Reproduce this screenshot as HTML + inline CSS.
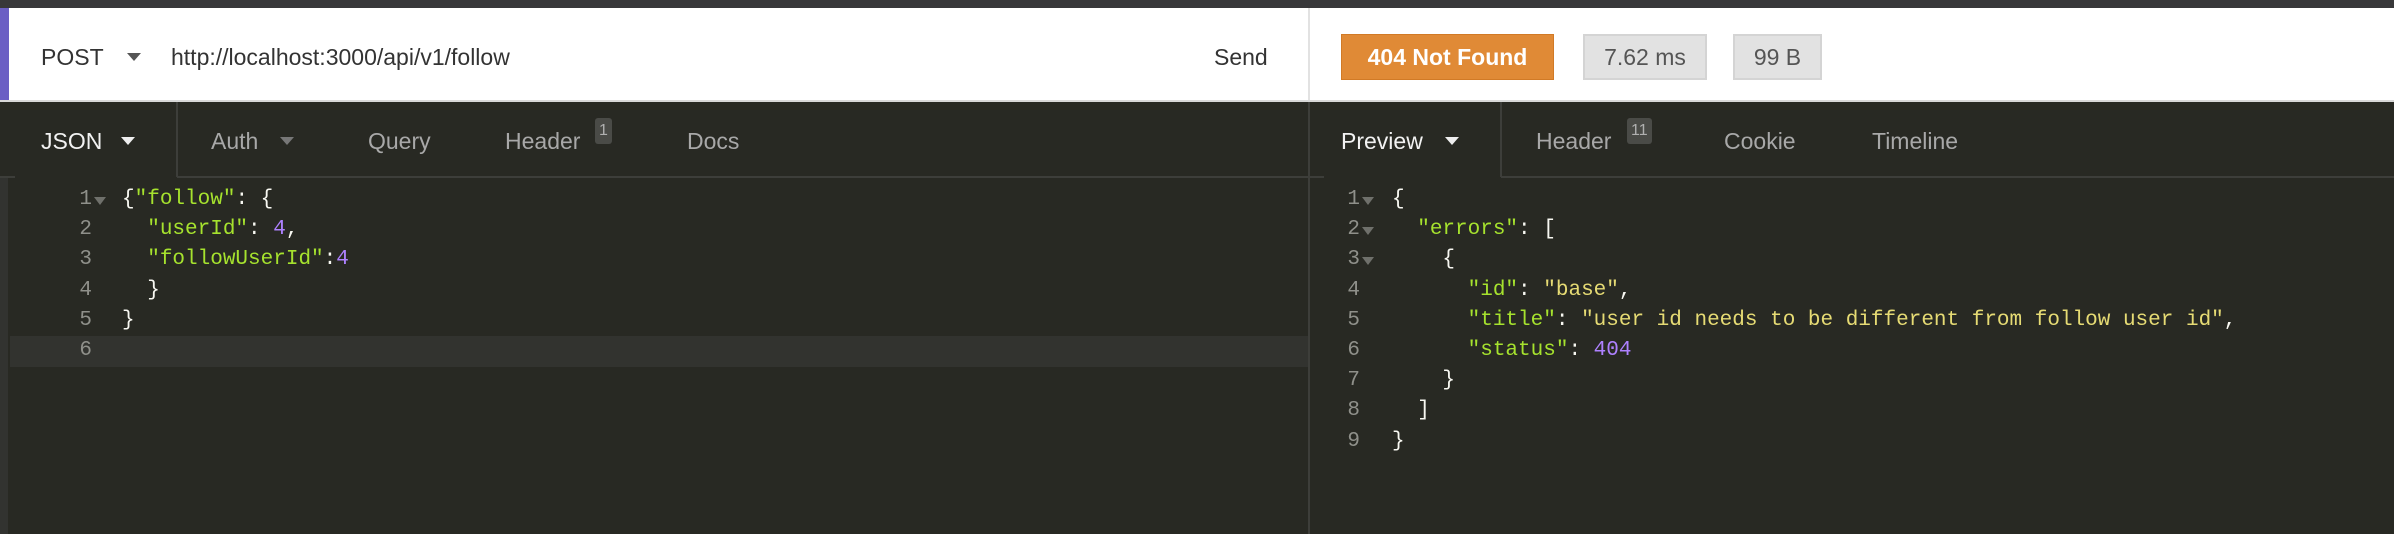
<!DOCTYPE html>
<html><head><meta charset="utf-8"><style>
*{margin:0;padding:0;box-sizing:border-box}
body{width:2394px;height:534px;background:#282923;position:relative;overflow:hidden;font-family:"Liberation Sans",sans-serif}
.a{position:absolute;white-space:pre}
.ui{font-size:23px;line-height:30px}
.code{font-family:"Liberation Mono",monospace;font-size:21px;line-height:30.2px;color:#f8f8f2}
.ln{color:#8f908a;text-align:right;width:30px}
.s{color:#a6e22e}.y{color:#e6db74}.n{color:#ae81ff}
.tri{position:absolute;width:0;height:0;border-left:7px solid transparent;border-right:7px solid transparent;border-top:8px solid}
.ft{position:absolute;width:0;height:0;border-left:6px solid transparent;border-right:6px solid transparent;border-top:8px solid #6f706b}
.badge{position:absolute;background:#4a4b47;color:#b0b0b0;font-size:16px;line-height:26px;padding:0 4px;border-radius:3px}
</style></head><body>
<div class="a" style="left:0;top:0;width:2394px;height:8px;background:#38383a"></div>
<div class="a" style="left:0;top:8px;width:2394px;height:94px;background:#fff;border-bottom:2px solid #d8d8d8"></div>
<div class="a" style="left:0;top:8px;width:9px;height:92px;background:#6b5fc4"></div>
<div class="a" style="left:1308px;top:8px;width:2px;height:92px;background:#e2e2e2"></div>
<div class="a ui" style="left:41px;top:42px;color:#333">POST</div>
<div class="tri" style="left:127px;top:53px;color:#555"></div>
<div class="a ui" style="left:171px;top:42px;color:#333">http://localhost:3000/api/v1/follow</div>
<div class="a ui" style="left:1214px;top:42px;color:#333">Send</div>
<div class="a ui" style="left:1341px;top:34px;width:213px;height:46px;background:#e08a36;border:1px solid #d17a26;color:#fff;font-weight:bold;text-align:center;line-height:44px">404 Not Found</div>
<div class="a ui" style="left:1583px;top:34px;width:124px;height:46px;background:#e2e2e2;border:2px solid #d4d4d4;color:#555;text-align:center;line-height:42px">7.62 ms</div>
<div class="a ui" style="left:1733px;top:34px;width:89px;height:46px;background:#e2e2e2;border:2px solid #d4d4d4;color:#555;text-align:center;line-height:42px">99 B</div>

<!-- tabs -->
<div class="a" style="left:0;top:102px;width:2394px;height:75px;background:#282923"></div>
<div class="a" style="left:177px;top:176px;width:1132px;height:2px;background:#3d3e3a"></div>
<div class="a" style="left:1501px;top:176px;width:893px;height:2px;background:#3d3e3a"></div>
<div class="a" style="left:0;top:176px;width:15px;height:2px;background:#3d3e3a"></div>
<div class="a" style="left:1309px;top:176px;width:15px;height:2px;background:#3d3e3a"></div>
<div class="a" style="left:176px;top:102px;width:2px;height:75px;background:#3d3e3a"></div>
<div class="a" style="left:1500px;top:102px;width:2px;height:75px;background:#3d3e3a"></div>
<div class="a" style="left:1308px;top:102px;width:2px;height:432px;background:#3d3e3a"></div>
<div class="a" style="left:0;top:178px;width:8px;height:356px;background:#323330"></div>

<div class="a ui" style="left:41px;top:126px;color:#f2f2f2">JSON</div>
<div class="tri" style="left:121px;top:137px;color:#eee"></div>
<div class="a ui" style="left:211px;top:126px;color:#a8a8a8">Auth</div>
<div class="tri" style="left:280px;top:137px;color:#777"></div>
<div class="a ui" style="left:368px;top:126px;color:#a8a8a8">Query</div>
<div class="a ui" style="left:505px;top:126px;color:#a8a8a8">Header</div>
<div class="badge" style="left:595px;top:118px">1</div>
<div class="a ui" style="left:687px;top:126px;color:#a8a8a8">Docs</div>

<div class="a ui" style="left:1341px;top:126px;color:#f2f2f2">Preview</div>
<div class="tri" style="left:1445px;top:137px;color:#eee"></div>
<div class="a ui" style="left:1536px;top:126px;color:#a8a8a8">Header</div>
<div class="badge" style="left:1627px;top:118px">11</div>
<div class="a ui" style="left:1724px;top:126px;color:#a8a8a8">Cookie</div>
<div class="a ui" style="left:1872px;top:126px;color:#a8a8a8">Timeline</div>

<!-- left code -->
<div class="a" style="left:10px;top:336px;width:1298px;height:31px;background:#32332f"></div>
<div class="a code ln" style="left:62px;top:185px">1
2
3
4
5
6</div>
<div class="ft" style="left:94px;top:197px"></div>
<div class="a code" style="left:122px;top:185px">{<span class="s">"follow"</span>: {
  <span class="s">"userId"</span>: <span class="n">4</span>,
  <span class="s">"followUserId"</span>:<span class="n">4</span>
  }
}
</div>

<!-- right code -->
<div class="a code ln" style="left:1330px;top:185px">1
2
3
4
5
6
7
8
9</div>
<div class="ft" style="left:1362px;top:197px"></div>
<div class="ft" style="left:1362px;top:227px"></div>
<div class="ft" style="left:1362px;top:257px"></div>
<div class="a code" style="left:1392px;top:185px">{
  <span class="s">"errors"</span>: [
    {
      <span class="s">"id"</span>: <span class="y">"base"</span>,
      <span class="s">"title"</span>: <span class="y">"user id needs to be different from follow user id"</span>,
      <span class="s">"status"</span>: <span class="n">404</span>
    }
  ]
}</div>
</body></html>
